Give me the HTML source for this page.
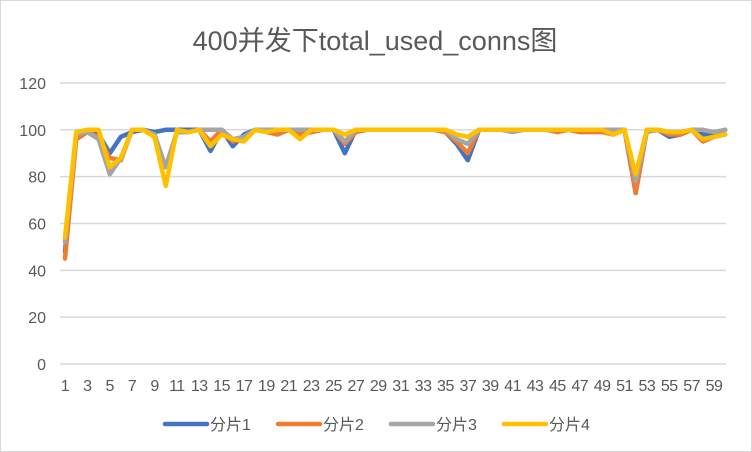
<!DOCTYPE html>
<html><head><meta charset="utf-8"><style>
html,body{margin:0;padding:0;background:#fff}
svg{display:block}
</style></head><body>
<svg id="c" width="752" height="452" xmlns="http://www.w3.org/2000/svg" font-family="'Liberation Sans','Noto Sans CJK SC',sans-serif">
<rect x="0.5" y="0.5" width="751" height="451" fill="#fff" stroke="#d9d9d9"/>
<text x="375" y="50" text-anchor="middle" font-size="27" fill="#595959">400并发下total_used_conns图</text>
<g id="grid" stroke="#d9d9d9" stroke-width="1.5"></g>
<g id="ylab" font-size="16" fill="#595959" text-anchor="end"></g>
<g id="xlab" font-size="16" fill="#595959" text-anchor="middle" letter-spacing="-0.5"></g>
<g id="lines" fill="none" stroke-width="4.5" stroke-linejoin="round" stroke-linecap="round"></g>
<g font-size="16" fill="#595959">
<line x1="165" y1="424" x2="207" y2="424" stroke="#4472c4" stroke-width="4.5" stroke-linecap="round"/><text x="210" y="430">分片1</text>
<line x1="278" y1="424" x2="320" y2="424" stroke="#ed7d31" stroke-width="4.5" stroke-linecap="round"/><text x="323" y="430">分片2</text>
<line x1="391" y1="424" x2="433" y2="424" stroke="#a5a5a5" stroke-width="4.5" stroke-linecap="round"/><text x="436" y="430">分片3</text>
<line x1="504" y1="424" x2="546" y2="424" stroke="#ffc000" stroke-width="4.5" stroke-linecap="round"/><text x="549" y="430">分片4</text>
</g>
</svg>
<script>
var NS="http://www.w3.org/2000/svg";
function el(p,t,a,txt){var e=document.createElementNS(NS,t);for(var k in a)e.setAttribute(k,a[k]);if(txt!==undefined)e.textContent=txt;document.getElementById(p).appendChild(e);}
function Y(v){return 364-v*2.342;}
function X(i){return 65+(i-1)*11.19;}
for(var v=0;v<=120;v+=20){el("grid","line",{x1:60,x2:726,y1:Y(v),y2:Y(v)});el("ylab","text",{x:46,y:Y(v)+6},String(v));}
for(var i=1;i<=59;i+=2){el("xlab","text",{x:X(i),y:391},String(i));}
function fill(arr){var r=[];for(var i=1;i<=60;i++)r.push(arr[i]!==undefined?arr[i]:100);return r;}
var blue=fill({1:48,2:97,3:99,4:98,5:90,6:97,7:99,9:99,14:91,16:93,17:98,22:98,23:99,26:90,35:99,36:94,37:87,52:73,55:97,56:98,58:98,59:98});
var orange=fill({1:45,2:96,3:99,4:97,5:88,6:87,9:97,10:84,11:99,12:99,14:95,16:95,17:97,19:99,20:98,22:98,23:99,26:94,27:99,35:99,36:95,37:90,45:99,47:99,48:99,49:99,50:98,52:73,55:98,56:98,58:95,59:97,60:98});
var gray=fill({1:52,2:98,3:99,4:96,5:81,6:88,9:98,10:84,11:99,12:99,16:96,17:97,26:95,36:96,37:94,41:99,52:78,53:99,55:99,56:99,59:99});
var yel=fill({1:54,2:99,5:84,6:88,9:97,10:76,12:99,14:93,15:98,16:96,17:95,19:99,22:96,26:98,36:98,37:97,50:98,52:81,55:99,56:99,58:96,59:97,60:98});
[[blue,"#4472c4"],[orange,"#ed7d31"],[gray,"#a5a5a5"],[yel,"#ffc000"]].forEach(function(s){
 var p=s[0].map(function(v,i){return X(i+1).toFixed(1)+","+Y(v).toFixed(1);}).join(" ");
 el("lines","polyline",{points:p,stroke:s[1]});
});
</script>
</body></html>
